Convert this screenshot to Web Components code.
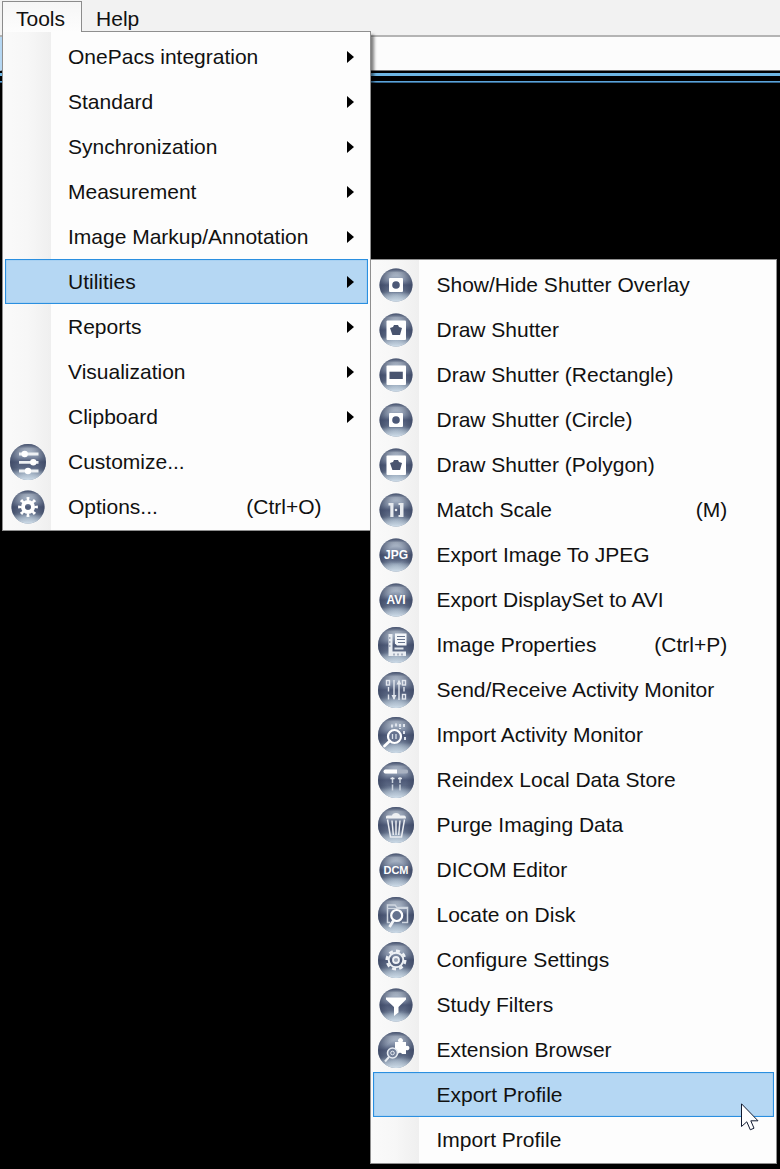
<!DOCTYPE html>
<html lang="en">
<head>
<meta charset="utf-8">
<title>Tools menu</title>
<style>
  body {
    margin: 0;
    min-height: 100vh;
    background: #000;
    color: #111;
    font: 21px/25px "Liberation Sans", Arial, sans-serif;
  }
</style>
</head>
<body>
<menu-bar>
  <menu-tab label="Tools" open>
    <menu-panel>
      <menu-item arrow>OnePacs integration</menu-item>
      <menu-item arrow>Standard</menu-item>
      <menu-item arrow>Synchronization</menu-item>
      <menu-item arrow>Measurement</menu-item>
      <menu-item arrow>Image Markup/Annotation</menu-item>
      <menu-item arrow active>Utilities
        <menu-panel slot="submenu">
          <menu-item icon="circle">Show/Hide Shutter Overlay</menu-item>
          <menu-item icon="polygon">Draw Shutter</menu-item>
          <menu-item icon="rectangle">Draw Shutter (Rectangle)</menu-item>
          <menu-item icon="circle">Draw Shutter (Circle)</menu-item>
          <menu-item icon="polygon">Draw Shutter (Polygon)</menu-item>
          <menu-item icon="scale" shortcut="(M)">Match Scale</menu-item>
          <menu-item icon="jpg">Export Image To JPEG</menu-item>
          <menu-item icon="avi">Export DisplaySet to AVI</menu-item>
          <menu-item icon="properties" shortcut="(Ctrl+P)">Image Properties</menu-item>
          <menu-item icon="transfer">Send/Receive Activity Monitor</menu-item>
          <menu-item icon="import">Import Activity Monitor</menu-item>
          <menu-item icon="reindex">Reindex Local Data Store</menu-item>
          <menu-item icon="trash">Purge Imaging Data</menu-item>
          <menu-item icon="dcm">DICOM Editor</menu-item>
          <menu-item icon="locate">Locate on Disk</menu-item>
          <menu-item icon="settings">Configure Settings</menu-item>
          <menu-item icon="filter">Study Filters</menu-item>
          <menu-item icon="extension">Extension Browser</menu-item>
          <menu-item active>Export Profile<mouse-pointer slot="submenu"></mouse-pointer></menu-item>
          <menu-item>Import Profile</menu-item>
        </menu-panel>
      </menu-item>
      <menu-item arrow>Reports</menu-item>
      <menu-item arrow>Visualization</menu-item>
      <menu-item arrow>Clipboard</menu-item>
      <menu-item icon="sliders">Customize...</menu-item>
      <menu-item icon="gear" shortcut="(Ctrl+O)">Options...</menu-item>
    </menu-panel>
  </menu-tab>
  <menu-tab label="Help"></menu-tab>
</menu-bar>
<tool-strip></tool-strip>

<script>
(function () {
  function template(html) {
    const tmpl = document.createElement('template');
    tmpl.innerHTML = html;
    return tmpl;
  }

  class BaseElement extends HTMLElement {
    constructor() {
      super();
      this.attachShadow({ mode: 'open' });
      this.shadowRoot.appendChild(this.constructor.template.content.cloneNode(true));
    }
  }

  class MenuBar extends BaseElement {}
  MenuBar.template = template(`
    <style>
      :host { display: block; background: #f2f2f2; border-bottom: 2px solid #b4b4b4; }
      nav { display: flex; padding: 1px 0 3px 2px; }
    </style>
    <nav><slot></slot></nav>
  `);

  class MenuTab extends BaseElement {
    connectedCallback() {
      const button = this.shadowRoot.querySelector('button');
      button.textContent = this.getAttribute('label');
      button.setAttribute('aria-expanded', this.hasAttribute('open'));
    }
  }
  MenuTab.template = template(`
    <style>
      :host { display: block; position: relative; }
      button {
        display: block;
        padding: 4px 13px 1px;
        border: 1px solid transparent;
        border-bottom: 0;
        background: none;
        color: inherit;
        font: inherit;
      }
      :host([open]) button {
        position: relative;
        z-index: 3;
        padding-right: 16px;
        border-color: #8c8c8c;
        background: linear-gradient(#f6f6f6, #fdfdfd);
      }
      .drop { position: absolute; z-index: 2; top: calc(100% - 1px); left: 0; }
    </style>
    <button type="button"></button>
    <div class="drop"><slot></slot></div>
  `);

  class MenuPanel extends BaseElement {}
  MenuPanel.template = template(`
    <style>
      :host {
        display: block;
        width: max-content;
        padding: 2px 2px 1px;
        border: 1px solid #8f8f8f;
        background: linear-gradient(to right, #fafafa, #f7f7f7 24px, #efefef 48px, #fdfdfd 48px);
        box-shadow: 3px 4px 3px rgba(0, 0, 0, .5);
      }
    </style>
    <div role="menu"><slot></slot></div>
  `);

  class MenuItem extends BaseElement {
    connectedCallback() {
      const root = this.shadowRoot;
      const icon = this.getAttribute('icon');
      if (icon) {
        root.querySelector('.gutter').innerHTML = '<menu-icon name="' + icon + '"></menu-icon>';
      }
      root.querySelector('.shortcut').textContent = this.getAttribute('shortcut') || '';
    }
  }
  // submenus open to the right of their item
  MenuItem.template = template(`
    <style>
      :host { display: block; position: relative; }
      button {
        display: flex;
        align-items: center;
        box-sizing: border-box;
        width: 100%;
        min-height: 45px;
        padding: 0;
        border: 1px solid transparent;
        background: none;
        color: inherit;
        font: inherit;
        text-align: left;
        white-space: nowrap;
      }
      :host([active]) > button,
      :host([active]) button { background: #b5d7f3; border-color: #2a8fe0; box-shadow: inset 0 0 1px #2a8fe0; }
      .gutter { display: flex; justify-content: center; width: 43px; margin-right: 19px; }
      .label { flex: 1; padding-right: 13px; }
      .tail { display: flex; justify-content: flex-end; width: 46px; }
      .tail svg { display: none; margin-right: 13px; }
      :host([arrow]) .tail svg { display: block; }
      ::slotted(menu-panel) { position: absolute; z-index: 4; top: 0; left: calc(100% + 2px); }
      ::slotted(mouse-pointer) { position: absolute; top: 31px; right: 15px; }
    </style>
    <button type="button" role="menuitem">
      <span class="gutter"></span>
      <span class="label"><slot></slot></span>
      <span class="shortcut"></span>
      <span class="tail"><svg width="7" height="12" viewBox="0 0 7 12"><path d="M0 0L7 6L0 12Z" fill="#000"/></svg></span>
    </button>
    <slot name="submenu"></slot>
  `);

  // glyphs sit in a 36 x 36 box on top of the glass ball
  const page = '<rect x="8.5" y="8.5" width="19.5" height="19.5" rx="1" fill="#fff"/>';
  const glyphs = {
    circle: '<rect x="11" y="11" width="14" height="14" rx="1" fill="#fff"/><circle cx="18" cy="18" r="3.8" fill="#4b5877"/>',
    polygon: page + '<path d="M16 13H20L21 15L24 16L22 23H14.4L12 16L15 15Z" fill="#49546f"/>',
    rectangle: page + '<rect x="11.5" y="14.7" width="13.3" height="7.3" fill="#49546f"/>',
    scale: '<path d="M10.5 11h5v14h-3.2V13.4h-1.8zM20.5 11h5v14h-5v-2h1.5V13h-1.500z" fill="#e8ebef"/><circle cx="18" cy="18" r="1.3" fill="#e8ebef"/>',
    jpg: '<text x="18" y="22" font-size="12">JPG</text>',
    avi: '<text x="18" y="22" font-size="12">AVI</text>',
    dcm: '<text x="18" y="22" font-size="11">DCM</text>',
    properties: '<path d="M10.500 7h4v17.500H28v4.500H10.500z" fill="#e9edf2"/><path d="M17 6.500h11.500v12H19l-2-2z" fill="#f5f7fa"/>' +
      '<path d="M19 9.500h8M19 12.500h8M20 15.500h7" stroke="#68748d" stroke-width="1.2"/>' +
      '<path d="M16.500 21.500h9" stroke="#dfe4eb" stroke-width="2"/><path d="M11 11h1.500M11 15h1.500M11 19h1.500M16 28.500v-2M20 28.500v-2M24 28.500v-2" stroke="#68748d"/>',
    transfer: '<g fill="none" stroke="#e3e7ee" stroke-width="1.4"><rect x="8.5" y="8.5" width="3" height="4.500"/><path d="M10.500 15v4.500M10.500 22.500v5M26 15v4.500M16 8v19M21 9v19"/>' +
      '<rect x="24.500" y="8.500" width="3" height="4.500"/><rect x="24.500" y="22.500" width="3" height="4.500"/></g><path d="M13.500 23h5L16 28zM18.500 12.500h5L21 7.500z" fill="#e3e7ee"/>',
    import: '<path d="M14 7.500v4M18 6.500v4M22 7v5M26 7v4M26 14v4M27 20v4" stroke="#dfe4ec" stroke-width="2" stroke-dasharray="3 1"/>' +
      '<circle cx="16.500" cy="19.500" r="6.500" fill="#66738f" stroke="#fff" stroke-width="2.200"/><path d="M11.800 24L6.500 29" stroke="#fff" stroke-width="2.800" stroke-linecap="round"/>' +
      '<path d="M14.500 17v5M18 17v5" stroke="#d8dfe8" stroke-width="1.3"/>',
    reindex: '<rect x="6" y="7.500" width="24" height="4" rx="1.5" fill="#a9b2c1"/><path d="M7.500 7.500H19v4H7.500a1.500 1.500 0 0 1 0-4z" fill="#fff"/>' +
      '<path d="M14.500 15v14M22 15v14" stroke="#cbd3de" stroke-width="1.5" stroke-dasharray="6 1.5"/><path d="M12.500 16.500h4M20 16.500h4" stroke="#e5e9ef" stroke-width="1.5"/>',
    trash: '<g fill="none" stroke="#e9ecf1" stroke-width="1.5"><path d="M9.500 12.500L12.500 30H23.500L26.500 12.500M14 13.500L15.300 28M18 13.500V28M22 13.500L20.700 28"/></g>' +
      '<path d="M8 9.500Q8 8.500 10 8.500H14Q14.500 6 18 6T22 8.500H26Q28 8.500 28 11.500H8z" fill="#eef0f3"/>',
    locate: '<path d="M12 25.500H9.500V8H17L19 10.500H29.500V25.500H24" fill="none" stroke="#cfd6e0" stroke-width="1.5"/><path d="M9.500 11.500H29" stroke="#cfd6e0"/>' +
      '<circle cx="18.700" cy="18.500" r="5.500" fill="#65728e" stroke="#fff" stroke-width="2.200"/><path d="M15.500 23.500L11.500 30" stroke="#f3f5f8" stroke-width="2.800"/>',
    settings: '<circle cx="18" cy="18" r="9.200" fill="none" stroke="#eef1f5" stroke-width="2.600" pathLength="16" stroke-dasharray="1.100 .9"/>' +
      '<circle cx="18" cy="18" r="7.300" fill="none" stroke="#eef1f5" stroke-width="2"/><circle cx="18" cy="18" r="3" fill="#9aa4b6" stroke="#eef1f5" stroke-width="1.800"/>',
    gear: '<circle cx="18" cy="18" r="8.200" fill="none" stroke="#fff" stroke-width="3.400" pathLength="16" stroke-dasharray=".85 1.150" stroke-dashoffset=".42"/>' +
      '<circle cx="18" cy="18" r="5" fill="none" stroke="#fff" stroke-width="4"/>',
    filter: '<path d="M8 10.500H28V12.500L20.500 20V25.500L16 29V20L8 12.500z" fill="#fff"/>',
    extension: '<path d="M17 10h3.500a2.500 2.500 0 1 1 4 0H28v4a2.300 2.300 0 1 1 0 4V22H24a2.200 2.200 0 0 0-4 0H17z" fill="#fff"/>' +
      '<circle cx="14.500" cy="21" r="5" fill="#73809a" stroke="#e6ebf1" stroke-width="1.6"/><circle cx="14.500" cy="21" r="1.8" fill="none" stroke="#e6ebf1"/>' +
      '<path d="M11 25L7 29.500" stroke="#e6ebf1" stroke-width="2"/>',
    sliders: '<path d="M9 10H28.500M9 18.300H28.500M9 27H28.500" stroke="#eef1f4" stroke-width="2.800"/><g fill="#fff"><circle cx="14.700" cy="10" r="3.2"/><circle cx="23.300" cy="18.300" r="3.2"/><circle cx="18" cy="27" r="3.2"/></g>'
  };
  const large = ['properties', 'transfer', 'import', 'reindex', 'trash', 'locate', 'settings', 'extension', 'sliders'];

  class MenuIcon extends BaseElement {
    connectedCallback() {
      const name = this.getAttribute('name');
      this.shadowRoot.querySelector('.glyph').innerHTML = glyphs[name];
      const r = large.includes(name) ? 18 : 16.5;
      this.shadowRoot.querySelectorAll('.ball').forEach(c => c.setAttribute('r', r));
    }
  }
  MenuIcon.template = template(`
    <style>
      :host { display: block; }
      svg { display: block; }
      text { fill: #fff; font-family: "Liberation Sans", Arial, sans-serif; font-weight: bold; text-anchor: middle; }
    </style>
    <svg width="36" height="36" viewBox="0 0 36 36" aria-hidden="true">
      <defs>
        <linearGradient id="glass" x1="0" y1="0" x2="0" y2="1">
          <stop offset="0" stop-color="#5d6a86"/>
          <stop offset=".12" stop-color="#c3cedb"/>
          <stop offset=".35" stop-color="#8390a7"/>
          <stop offset=".5" stop-color="#4d5977"/>
          <stop offset=".66" stop-color="#5c6984"/>
          <stop offset=".86" stop-color="#a6b8ca"/>
          <stop offset="1" stop-color="#d3e2ee"/>
        </linearGradient>
        <radialGradient id="rim" cx=".5" cy=".5" r=".5">
          <stop offset=".55" stop-color="#38435f" stop-opacity="0"/>
          <stop offset="1" stop-color="#38435f" stop-opacity=".65"/>
        </radialGradient>
        <linearGradient id="shine" x1="0" y1="0" x2="0" y2="1">
          <stop offset=".72" stop-color="#dcebf6" stop-opacity="0"/>
          <stop offset="1" stop-color="#dcebf6" stop-opacity=".9"/>
        </linearGradient>
      </defs>
      <circle class="ball" cx="18" cy="18" fill="url(#glass)"/>
      <circle class="ball" cx="18" cy="18" fill="url(#rim)"/>
      <circle class="ball" cx="18" cy="18" fill="url(#shine)"/>
      <g class="glyph"></g>
    </svg>
  `);

  class MousePointer extends BaseElement {}
  MousePointer.template = template(`
    <style>
      :host { display: block; pointer-events: none; }
      svg { display: block; }
    </style>
    <svg width="18" height="28" viewBox="0 0 18 28">
      <path d="M.5 .8V23.500L5.800 18.800L9.300 26.800L13 25.200L9.800 17.800H17z" fill="#fff" stroke="#111a30"/>
    </svg>
  `);

  // white strip under the menu bar, closed by two blue rules
  class ToolStrip extends BaseElement {}
  ToolStrip.template = template(`
    <style>
      :host { display: block; }
      .strip { height: 33px; background: #fcfcfc; border-left: 2px solid #b5d7f3; border-bottom: 1px solid #777; }
      .rule { height: 3px; margin-top: 2px; background: #6db5e3; }
      .thin { height: 1px; margin-top: 5px; border-bottom: 1px solid #33638a; background: #5ba3d8; }
    </style>
    <div class="strip"></div>
    <div class="rule"></div>
    <div class="thin"></div>
  `);

  customElements.define('menu-icon', MenuIcon);
  customElements.define('mouse-pointer', MousePointer);
  customElements.define('menu-item', MenuItem);
  customElements.define('menu-panel', MenuPanel);
  customElements.define('menu-tab', MenuTab);
  customElements.define('menu-bar', MenuBar);
  customElements.define('tool-strip', ToolStrip);
})();
</script>
</body>
</html>
